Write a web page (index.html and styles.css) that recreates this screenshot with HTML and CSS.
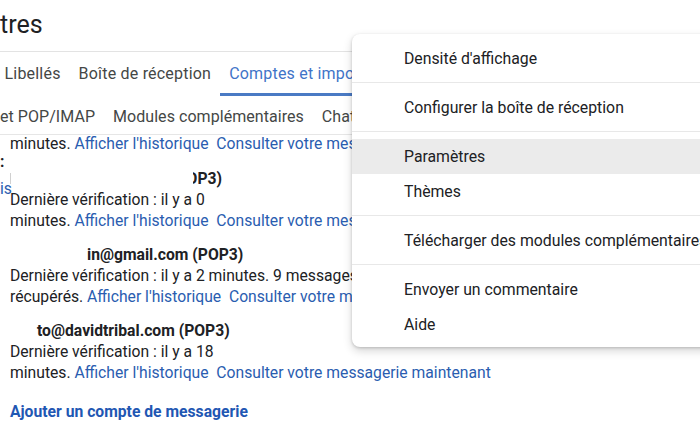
FILE: index.html
```html
<!DOCTYPE html>
<html lang="fr">
<head>
<meta charset="utf-8">
<title>Paramètres</title>
<link rel="stylesheet" href="styles.css">
</head>
<body>
<div class="page">
  <header class="head">
    <h1 class="title">tres</h1>
  </header>
  <nav class="tabs">
    <span class="tab">Libellés</span>
    <span class="tab">Boîte de réception</span>
    <span class="tab active">Comptes et importation</span>
  </nav>
  <nav class="subtabs">
    <span class="sub">et POP/IMAP</span>
    <span class="sub">Modules complémentaires</span>
    <span class="sub">Chat et Meet</span>
  </nav>
  <main class="scroll">
    <div class="grid">
      <div class="labels">
        <div class="colon">:</div>
        <div class="more">is</div>
      </div>
      <div class="accounts">
        <div class="line first">minutes. <a class="lnk">Afficher l'historique</a>&nbsp; <a class="lnk">Consulter votre messagerie maintenant</a></div>

        <div class="acct">
          <div class="name"><span class="cursor"></span><span class="clip"><span>(POP3)</span></span></div>
          <div class="line">Dernière vérification : il y a 0</div>
          <div class="line">minutes. <a class="lnk">Afficher l'historique</a>&nbsp; <a class="lnk">Consulter votre messagerie maintenant</a></div>
        </div>

        <div class="acct">
          <div class="name ind2">in@gmail.com (POP3)</div>
          <div class="line">Dernière vérification : il y a 2 minutes. 9 messages</div>
          <div class="line">récupérés. <a class="lnk">Afficher l'historique</a>&nbsp; <a class="lnk">Consulter votre messagerie maintenant</a></div>
        </div>

        <div class="acct">
          <div class="name ind3">to@davidtribal.com (POP3)</div>
          <div class="line">Dernière vérification : il y a 18</div>
          <div class="line">minutes. <a class="lnk">Afficher l'historique</a>&nbsp; <a class="lnk">Consulter votre messagerie maintenant</a></div>
        </div>

        <a class="add">Ajouter un compte de messagerie</a>
      </div>
    </div>
  </main>
</div>

<div class="menu">
  <div class="sec"><div class="item">Densité d'affichage</div></div>
  <div class="sec"><div class="item">Configurer la boîte de réception</div></div>
  <div class="sec">
    <div class="item hover">Paramètres</div>
    <div class="item">Thèmes</div>
  </div>
  <div class="sec"><div class="item">Télécharger des modules complémentaires</div></div>
  <div class="sec">
    <div class="item">Envoyer un commentaire</div>
    <div class="item">Aide</div>
  </div>
</div>
</body>
</html>
```

FILE: styles.css
```css
* { box-sizing: border-box; }
html, body {
  margin: 0;
  padding: 0;
  width: 700px;
  height: 429px;
  overflow: hidden;
  background: #fff;
  font-family: Roboto, "Liberation Sans", Arial, sans-serif;
  color: #202124;
}
.page {
  display: flex;
  flex-direction: column;
  height: 429px;
}
.head {
  height: 52px;
  border-bottom: 1px solid #e3e3e3;
  padding-top: 10px;
}
.title {
  margin: 0;
  font-weight: 400;
  font-size: 25px;
  line-height: 30px;
  color: #202124;
}
.tabs {
  display: flex;
  height: 44px;
  margin-left: -4.5px;
  white-space: nowrap;
}
.tab {
  padding: 3px 9px 0;
  font-size: 16px;
  letter-spacing: 0.2px;
  line-height: 38px;
  color: #444746;
  border-bottom: 3px solid transparent;
}
.tab.active {
  color: #3f74c8;
  border-bottom-color: #4a7ac4;
}
.subtabs {
  display: flex;
  gap: 18px;
  height: 39px;
  padding-top: 3px;
  border-bottom: 1px solid #e6e6e6;
  white-space: nowrap;
}
.sub {
  font-size: 16px;
  letter-spacing: 0.05px;
  line-height: 35px;
  color: #444746;
}
.scroll {
  flex: 1;
  overflow: hidden;
}
.grid {
  display: grid;
  grid-template-columns: 10px 1fr;
  margin-top: -2px;
}
.labels {
  font-size: 15.7px;
}
.colon {
  margin-top: 18px;
  line-height: 21px;
  font-weight: 700;
}
.more {
  margin-top: 6px;
  line-height: 21px;
  color: #2a5db0;
}
.accounts {
  font-size: 15.7px;
  line-height: 21px;
  white-space: nowrap;
}
.line { height: 21px; }
.lnk { color: #2a5db0; }
.acct { margin-top: 14px; }
.acct + .acct { margin-top: 13px; }
.name {
  font-weight: 700;
  height: 21px;
  display: flex;
  align-items: center;
}
.cursor {
  width: 1px;
  height: 11px;
  background: #d0d0d0;
  margin-right: 182px;
}
.clip {
  display: inline-flex;
  justify-content: flex-end;
  overflow: hidden;
  width: 29px;
}
.ind2 { padding-left: 77px; }
.ind3 { padding-left: 27px; }
.add {
  display: block;
  margin-top: 18px;
  font-weight: 700;
  color: #1f57b3;
}

.menu {
  position: absolute;
  top: 34px;
  left: 352px;
  width: 420px;
  height: 313px;
  background: #fff;
  border-radius: 8px;
  box-shadow: 0 1px 3px rgba(0,0,0,0.18), 0 4px 10px rgba(0,0,0,0.16);
}
.sec {
  padding: 7px 0 6px;
  border-bottom: 1px solid #e8e8e8;
}
.sec:last-child { border-bottom: 0; padding-bottom: 5px; }
.item {
  height: 35px;
  line-height: 35px;
  padding-left: 52px;
  font-size: 15.8px;
  color: #202124;
  white-space: nowrap;
}
.item.hover { background: #ebebeb; }
```
